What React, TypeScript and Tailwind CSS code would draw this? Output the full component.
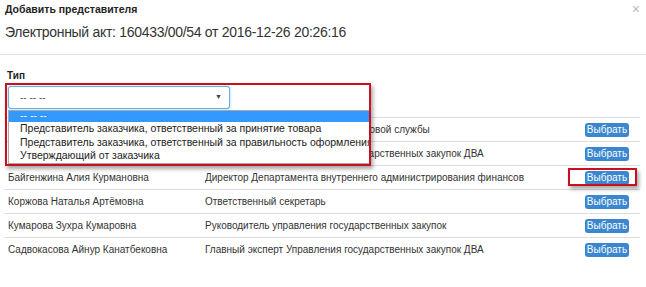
type Rep = { name: string; position: string }

const REPS: Rep[] = [
  { name: 'Абдрахманова Гульнара Ериковна', position: 'Заместитель руководителя финансовой службы' },
  { name: 'Ахметова Сауле Муратовна', position: 'Главный эксперт Управления государственных закупок ДВА' },
  { name: 'Байгенжина Алия Курмановна', position: 'Директор Департамента внутреннего администрирования финансов' },
  { name: 'Коржова Наталья Артёмовна', position: 'Ответственный секретарь' },
  { name: 'Кумарова Зухра Кумаровна', position: 'Руководитель управления государственных закупок' },
  { name: 'Садвокасова Айнур Канатбековна', position: 'Главный эксперт Управления государственных закупок ДВА' },
]

const OPTIONS = [
  'Представитель заказчика, ответственный за принятие товара',
  'Представитель заказчика, ответственный за правильность оформления',
  'Утверждающий от заказчика',
]

export default function App() {
  return (
    <div className="relative w-[646px] h-[287px] overflow-hidden bg-white text-[#333] font-['Liberation_Sans',Arial,sans-serif]">
      {/* Шапка */}
      <div className="px-[5px] pt-[3px] h-[55px] border-b border-[#e5e5e5]">
        <div className="flex items-start justify-between">
          <h4 className="text-[10.5px] font-bold leading-[13px] text-[#222]">Добавить представителя</h4>
          <span className="text-[14px] leading-[12px] text-[#bbb] mr-[1px]">×</span>
        </div>
        <p className="mt-[6px] text-[14px] tracking-[-0.3px] leading-[20px] text-[#333]">
          Электронный акт: 160433/00/54 от 2016-12-26 20:26:16
        </p>
      </div>

      {/* Тело */}
      <div className="px-[5px] pt-[15px]">
        <label className="block pl-[2px] text-[10px] font-bold leading-[12px] text-[#222]">Тип</label>
        <div className="mt-[4px] ml-[3px] w-[222px] h-[23px] border border-[#66afe9] rounded-[3px]" />

        <table className="mt-[8px] w-[635px] text-[10px] text-[#333] border-collapse">
          <tbody>
            {REPS.map((r) => (
              <tr key={r.name} className="h-[24px] border-t border-[#ddd]">
                <td className="pl-[3px] w-[200px] whitespace-nowrap">{r.name}</td>
                <td className="whitespace-nowrap">{r.position}</td>
                <td className="w-[60px] text-right pr-[11px]">
                  <button className="h-[14px] w-[44px] rounded-[3px] bg-[#3a87cf] text-[10px] leading-[14px] text-white">
                    Выбрать
                  </button>
                </td>
              </tr>
            ))}
          </tbody>
        </table>
      </div>

      {/* Открытый список — выделен красной рамкой */}
      <div className="absolute left-[5px] top-[83px] w-[366px] h-[83px] border-2 border-[#c8101e] shadow-[2px_3px_4px_rgba(0,0,0,0.35)] overflow-hidden">
        <div className="absolute left-[1px] top-[25px] w-[370px] bg-white border border-[#a9a9a9] text-[10.5px] leading-[13.5px] text-[#222]">
          <div className="h-[11px] bg-[#3399ff] pl-[11px] text-white leading-[9px]">-- -- --</div>
          {OPTIONS.map((o) => (
            <div key={o} className="pl-[11px] whitespace-nowrap">{o}</div>
          ))}
        </div>
        <div className="absolute left-[1px] top-[1px] w-[222px] h-[23px] flex items-center justify-between pl-[11px] pr-[7px] bg-white border border-[#66afe9] rounded-[3px] shadow-[0_0_3px_rgba(102,175,233,0.6)]">
          <span className="text-[10px] text-[#555]">-- -- --</span>
          <span className="text-[7px] text-[#444]">▼</span>
        </div>
      </div>

      {/* Рамка вокруг кнопки */}
      <div className="absolute left-[568px] top-[168px] w-[69px] h-[18px] border-2 border-[#c8101e] shadow-[2px_3px_4px_rgba(0,0,0,0.35)]" />
    </div>
  )
}
